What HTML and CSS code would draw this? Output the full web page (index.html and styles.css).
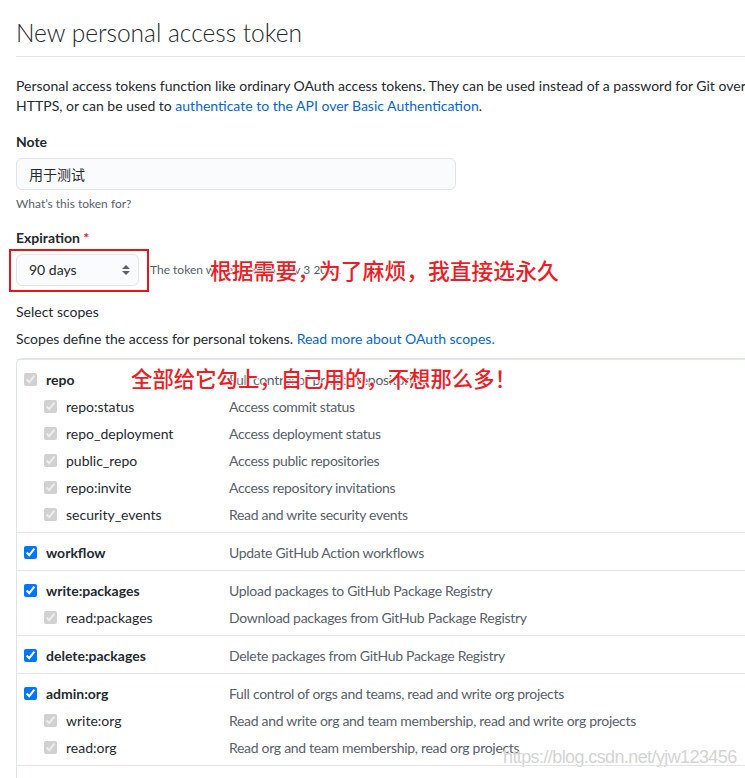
FILE: index.html
```html
<!DOCTYPE html>
<html lang="en">
<head>
    <meta charset="UTF-8">
    <meta name="viewport" content="width=device-width, initial-scale=1.0">
    <title>New personal access token</title>
    <link rel="stylesheet" href="styles.css">
</head>
<body>
<div class="page">
    <h2 class="page-title">New personal access token</h2>

    <p class="intro">
        Personal access tokens function like ordinary OAuth access tokens. They can be used instead of a password for Git over<br>
        HTTPS, or can be used to <a href="#">authenticate to the API over Basic Authentication</a>.
    </p>

    <div class="form-group">
        <label class="field-label" for="note">Note</label>
        <input class="field-input" type="text" id="note" value="用于测试">
        <p class="note">What’s this token for?</p>
    </div>

    <div class="form-group expiration">
        <label class="field-label">Expiration <span class="required">*</span></label>
        <div class="expire-row">
            <div class="fake-select">
                <span>90 days</span>
                <svg width="10" height="14" viewBox="0 0 10 14"><path d="M5 2 L9 6 H1 Z M5 12 L1 8 H9 Z" fill="#586069"/></svg>
            </div>
            <span class="expire-note">The token will expire on Nov 3 2021</span>
            <div class="mark-box"></div>
            <div class="callout callout-expire">根据需要，为了麻烦，我直接选永久</div>
        </div>
    </div>

    <h3 class="scopes-title">Select scopes</h3>
    <p class="scopes-desc">Scopes define the access for personal tokens. <a href="#">Read more about OAuth scopes.</a></p>

    <div class="scopes">
        <div class="callout callout-scopes">全部给它勾上，自己用的，不想那么多！</div>

        <div class="scope-group">
            <div class="scope-row top">
                <label><input type="checkbox" checked disabled> repo</label>
                <span class="desc">Full control of private repositories</span>
            </div>
            <div class="scope-row child">
                <label><input type="checkbox" checked disabled> repo:status</label>
                <span class="desc">Access commit status</span>
            </div>
            <div class="scope-row child">
                <label><input type="checkbox" checked disabled> repo_deployment</label>
                <span class="desc">Access deployment status</span>
            </div>
            <div class="scope-row child">
                <label><input type="checkbox" checked disabled> public_repo</label>
                <span class="desc">Access public repositories</span>
            </div>
            <div class="scope-row child">
                <label><input type="checkbox" checked disabled> repo:invite</label>
                <span class="desc">Access repository invitations</span>
            </div>
            <div class="scope-row child">
                <label><input type="checkbox" checked disabled> security_events</label>
                <span class="desc">Read and write security events</span>
            </div>
        </div>

        <div class="scope-group">
            <div class="scope-row top">
                <label><input type="checkbox" checked> workflow</label>
                <span class="desc">Update GitHub Action workflows</span>
            </div>
        </div>

        <div class="scope-group">
            <div class="scope-row top">
                <label><input type="checkbox" checked> write:packages</label>
                <span class="desc">Upload packages to GitHub Package Registry</span>
            </div>
            <div class="scope-row child">
                <label><input type="checkbox" checked disabled> read:packages</label>
                <span class="desc">Download packages from GitHub Package Registry</span>
            </div>
        </div>

        <div class="scope-group">
            <div class="scope-row top">
                <label><input type="checkbox" checked> delete:packages</label>
                <span class="desc">Delete packages from GitHub Package Registry</span>
            </div>
        </div>

        <div class="scope-group">
            <div class="scope-row top">
                <label><input type="checkbox" checked> admin:org</label>
                <span class="desc">Full control of orgs and teams, read and write org projects</span>
            </div>
            <div class="scope-row child">
                <label><input type="checkbox" checked disabled> write:org</label>
                <span class="desc">Read and write org and team membership, read and write org projects</span>
            </div>
            <div class="scope-row child">
                <label><input type="checkbox" checked disabled> read:org</label>
                <span class="desc">Read org and team membership, read org projects</span>
            </div>
            <div class="watermark">https://blog.csdn.net/yjw123456</div>
        </div>

        <div class="scope-group">
            <div class="scope-row top">
                <label><input type="checkbox" checked> admin:public_key</label>
                <span class="desc">Full control of user public keys</span>
            </div>
        </div>
    </div>
</div>
</body>
</html>
```

FILE: styles.css
```css
html, body {
    margin: 0;
    overflow: hidden;
}
body {
    font-family: Lato, "Noto Sans CJK SC", sans-serif;
    font-size: 14px;
    line-height: 20px;
    color: #24292e;
    background: #fff;
}
a {
    color: #0366d6;
    text-decoration: none;
}
.page {
    width: 1000px;
    padding-left: 16px;
}
.page-title {
    margin: 0;
    padding: 18px 0 8px;
    font-size: 24.5px;
    line-height: 30px;
    font-weight: 300;
    border-bottom: 1px solid #e1e4e8;
}
.intro {
    margin: 19px 0 0;
}
.form-group {
    margin-top: 16px;
}
.expiration {
    margin-top: 15px;
}
.field-label {
    display: block;
    font-weight: 700;
    margin-bottom: 6px;
}
.required {
    color: #cb2431;
}
.field-input {
    box-sizing: border-box;
    width: 440px;
    height: 32px;
    padding: 0 12px;
    font-family: Lato, "Noto Sans CJK SC", sans-serif;
    font-size: 14px;
    color: #24292e;
    background: #fafbfc;
    border: 1px solid #e1e4e8;
    border-radius: 6px;
    outline: none;
}
.note {
    margin: 5px 0 0;
    font-size: 12px;
    line-height: 18px;
    color: #586069;
}
.expire-row {
    position: relative;
    display: flex;
    align-items: center;
    gap: 11px;
}
.fake-select {
    box-sizing: border-box;
    width: 123px;
    height: 32px;
    padding: 0 7px 0 12px;
    display: flex;
    align-items: center;
    justify-content: space-between;
    background: #fafbfc;
    border: 1px solid #e1e4e8;
    border-radius: 6px;
}
.expire-note {
    font-size: 12px;
    color: #586069;
}
.mark-box {
    position: absolute;
    left: -7px;
    top: -5px;
    width: 136px;
    height: 39px;
    border: 2px solid #e8141c;
}
.callout {
    position: absolute;
    font-family: "Noto Sans CJK SC", sans-serif;
    font-size: 21.8px;
    line-height: 26px;
    font-weight: 500;
    color: #ee1c25;
    white-space: nowrap;
    text-shadow: 0 0 2px #fff, 0 0 2px #fff, 1px 1px 1px #fff, -1px -1px 1px #fff;
}
.callout-expire {
    left: 194px;
    top: 3px;
}
.scopes-title {
    margin: 16px 0 0;
    font-size: 14px;
    line-height: 20px;
    font-weight: 400;
}
.scopes-desc {
    margin: 7px 0 0;
}
.scopes {
    position: relative;
    margin-top: 9px;
    border: 1px solid #e1e4e8;
    border-right: none;
    border-radius: 6px 0 0 0;
}
.callout-scopes {
    left: 114px;
    top: 6px;
    font-size: 21.4px;
    z-index: 2;
}
.scope-group {
    position: relative;
    padding: 6px 0 4px 7px;
    border-top: 1px solid #e1e4e8;
}
.scope-group:first-of-type {
    border-top: none;
}
.scope-row {
    display: grid;
    grid-template-columns: 205px 1fr;
    height: 27px;
    align-items: center;
}
.scope-row label {
    display: flex;
    align-items: center;
    gap: 9px;
}
.scope-row.top label {
    font-weight: 700;
}
.scope-row.child label {
    padding-left: 20px;
}
.scope-row input {
    margin: 0;
    width: 13px;
    height: 13px;
}
.desc {
    color: #586069;
    letter-spacing: -0.3px;
}
.watermark {
    position: absolute;
    left: 486px;
    top: 73px;
    font-family: "Liberation Sans", sans-serif;
    font-size: 18px;
    letter-spacing: -0.6px;
    color: #d4d4d4;
    text-shadow: 0 0 1px #fff;
}
```
